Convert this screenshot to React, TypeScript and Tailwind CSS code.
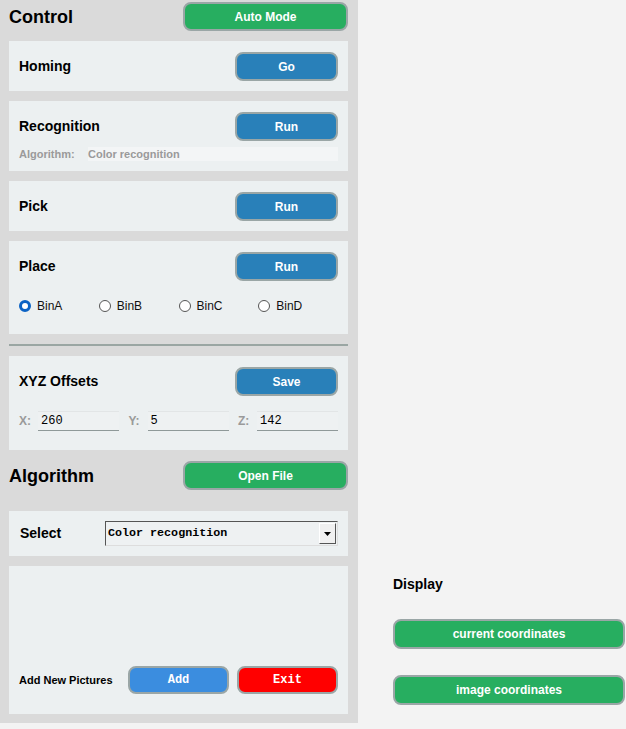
import React, { useState } from 'react';

const font = { fontFamily: '"Liberation Sans", Arial, sans-serif' };
const mono = { fontFamily: '"Liberation Mono", "Courier New", monospace' };

function Btn({ label, color, w, h = 'h-[29px]', mono: isMono }: { label: string; color: string; w: string; h?: string; mono?: boolean }) {
  return (
    <button
      className={`${w} ${h} ${color} rounded-lg border-2 border-[#9aa6a6] text-white text-[12px] font-bold flex items-center justify-center`}
      style={isMono ? mono : font}
    >
      {label}
    </button>
  );
}

function Card({ children, className = '' }: { children: React.ReactNode; className?: string }) {
  return <div className={`bg-[#ecf0f1] px-[10px] ${className}`}>{children}</div>;
}

function Radio({ label, checked, onClick }: { label: string; checked: boolean; onClick: () => void }) {
  return (
    <div className="w-[82px] flex items-center gap-[6px] cursor-pointer" onClick={onClick}>
      {checked ? (
        <span className="w-[12px] h-[12px] rounded-full border-[3.5px] border-[#0b62c4] bg-white" />
      ) : (
        <span className="w-[12px] h-[12px] rounded-full border border-[#555] bg-white" />
      )}
      <span className="text-[12px] text-[#111]">{label}</span>
    </div>
  );
}

function Field({ label, value }: { label: string; value: string }) {
  return (
    <div className="flex items-center w-[100px]">
      <span className="text-[12px] font-bold text-[#9a9a9a] w-[19px]">{label}</span>
      <div
        className="flex-1 h-[20px] bg-[#eef1f2] border-t border-[#e2e5e6] border-b border-b-[#8f9999] flex items-center px-[3px] text-[12px] text-black"
        style={mono}
      >
        {value}
      </div>
    </div>
  );
}

export default function App() {
  const [bin, setBin] = useState('BinA');

  return (
    <div className="w-[626px] h-[729px] bg-[#f3f3f3] flex" style={font}>
      <div className="w-[358px] h-[723px] bg-[#dadada] pl-[9px] pr-[10px] pt-[2px] flex flex-col">
        <div className="flex items-center justify-between h-[29px]">
          <h1 className="text-[18px] font-bold text-black leading-none">Control</h1>
          <Btn label="Auto Mode" color="bg-[#27ae60]" w="w-[165px]" />
        </div>

        <Card className="mt-[10px] h-[50px] pt-[11px]">
          <div className="flex items-center justify-between">
            <span className="text-[14px] font-bold text-black">Homing</span>
            <Btn label="Go" color="bg-[#2980b9]" w="w-[103px]" />
          </div>
        </Card>

        <Card className="mt-[10px] h-[70px] pt-[11px]">
          <div className="flex items-center justify-between">
            <span className="text-[14px] font-bold text-black">Recognition</span>
            <Btn label="Run" color="bg-[#2980b9]" w="w-[103px]" />
          </div>
          <div className="mt-[6px] flex items-center h-[14px]">
            <span className="w-[69px] text-[11px] font-bold text-[#9a9a9a]">Algorithm:</span>
            <span className="flex-1 h-[14px] bg-[#f3f5f6] text-[11px] font-bold text-[#9a9a9a] leading-[14px]">Color recognition</span>
          </div>
        </Card>

        <Card className="mt-[10px] h-[50px] pt-[11px]">
          <div className="flex items-center justify-between">
            <span className="text-[14px] font-bold text-black">Pick</span>
            <Btn label="Run" color="bg-[#2980b9]" w="w-[103px]" />
          </div>
        </Card>

        <Card className="mt-[10px] h-[93px] pt-[11px]">
          <div className="flex items-center justify-between">
            <span className="text-[14px] font-bold text-black">Place</span>
            <Btn label="Run" color="bg-[#2980b9]" w="w-[103px]" />
          </div>
          <div className="mt-[17px] h-[16px] flex items-center">
            {['BinA', 'BinB', 'BinC', 'BinD'].map(b => (
              <Radio key={b} label={b} checked={bin === b} onClick={() => setBin(b)} />
            ))}
          </div>
        </Card>

        <div className="mt-[10px] h-[2px] bg-[#9aa6a3]" />

        <Card className="mt-[10px] h-[94px] pt-[11px]">
          <div className="flex items-center justify-between">
            <span className="text-[14px] font-bold text-black">XYZ Offsets</span>
            <Btn label="Save" color="bg-[#2980b9]" w="w-[103px]" />
          </div>
          <div className="mt-[15px] flex justify-between">
            <Field label="X:" value="260" />
            <Field label="Y:" value="5" />
            <Field label="Z:" value="142" />
          </div>
        </Card>

        <div className="mt-[11px] flex items-center justify-between h-[29px]">
          <h2 className="text-[18px] font-bold text-black leading-none">Algorithm</h2>
          <Btn label="Open File" color="bg-[#27ae60]" w="w-[165px]" />
        </div>

        <Card className="mt-[21px] h-[45px] pt-[10px] pl-[11px]">
          <div className="flex items-center">
            <span className="w-[85px] text-[14px] font-bold text-black">Select</span>
            <div className="flex-1 h-[25px] flex items-stretch border-t border-l border-[#555] border-r border-b border-r-[#ddd] border-b-[#ddd] bg-[#eef1f2]">
              <span className="flex-1 flex items-center pl-[2px] text-[11.7px] font-bold text-black" style={mono}>
                Color recognition
              </span>
              <span className="w-[17px] my-[1px] mr-[1px] bg-[#f0f0f0] border-r border-b border-[#555] border-t border-l border-t-white border-l-white flex items-center justify-center">
                <svg width="7" height="4" viewBox="0 0 7 4"><path d="M0 0h7L3.5 4z" fill="#000" /></svg>
              </span>
            </div>
          </div>
        </Card>

        <Card className="mt-[10px] h-[148px] pt-[100px]">
          <div className="flex items-center justify-between">
            <span className="text-[11px] font-bold text-black">Add New Pictures</span>
            <div className="flex gap-[8px]">
              <Btn label="Add" color="bg-[#3b8ddf]" w="w-[101px]" h="h-[28px]" mono />
              <Btn label="Exit" color="bg-[#ff0000]" w="w-[101px]" h="h-[28px]" mono />
            </div>
          </div>
        </Card>
      </div>

      <div className="flex-1 pl-[35px] pt-[576px] flex flex-col">
        <span className="h-[16px] leading-[16px] text-[14px] font-bold text-black">Display</span>
        <div className="mt-[27px]">
          <Btn label="current coordinates" color="bg-[#27ae60]" w="w-[232px]" h="h-[30px]" />
        </div>
        <div className="mt-[26px]">
          <Btn label="image coordinates" color="bg-[#27ae60]" w="w-[232px]" h="h-[30px]" />
        </div>
      </div>
    </div>
  );
}
